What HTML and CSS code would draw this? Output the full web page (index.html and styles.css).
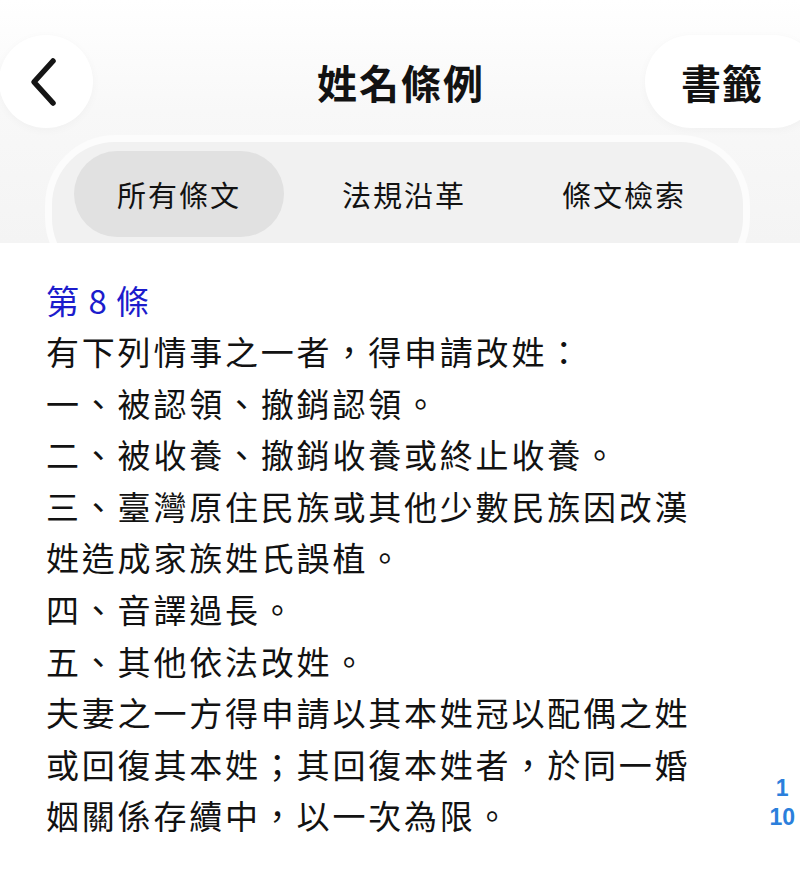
FILE: index.html
```html
<!DOCTYPE html>
<html>

<head>
    <meta name="viewport" content="width=device-width, initial-scale=1">
    <title>姓名條例</title>
    <link rel="stylesheet" href="styles.css">
</head>

<body>
    <div class="header">
        <div class="nav-row">
            <button class="back-button" aria-label="返回">
                <svg width="36" height="52" viewBox="0 0 36 52">
                    <path d="M27 5 L8 26 L27 47" fill="none" stroke="#151515" stroke-width="5.5" stroke-linecap="round" stroke-linejoin="round"/>
                </svg>
            </button>
            <h1 class="title">姓名條例</h1>
            <button class="bookmark-button">書籤</button>
        </div>
        <div class="tabs">
            <div class="tab active">所有條文</div>
            <div class="tab">法規沿革</div>
            <div class="tab">條文檢索</div>
        </div>
    </div>

    <div class="content">
        <h2 class="article-no">第 8 條</h2>
        <div class="article-text">
            <p>有下列情事之一者，得申請改姓：</p>
            <p>一、被認領、撤銷認領。</p>
            <p>二、被收養、撤銷收養或終止收養。</p>
            <p>三、臺灣原住民族或其他少數民族因改漢姓造成家族姓氏誤植。</p>
            <p>四、音譯過長。</p>
            <p>五、其他依法改姓。</p>
            <p>夫妻之一方得申請以其本姓冠以配偶之姓或回復其本姓；其回復本姓者，於同一婚姻關係存續中，以一次為限。</p>
        </div>
    </div>

    <div class="page-indicator">
        <span>1</span>
        <span>10</span>
    </div>
</body>

</html>
```

FILE: styles.css
```css
:root {
    --text-color: #121212;
    --article-blue: #1c1ccc;
    --page-blue: #2b7fdc;
    --tab-bg: #f1f1f1;
    --tab-active: #e1e1e1;
}

body {
    margin: 0;
    padding: 0;
    background-color: #ffffff;
    color: var(--text-color);
    font-family: "Noto Sans CJK TC", "Liberation Sans", sans-serif;
}

.header {
    height: 243px;
    overflow: hidden;
    background: linear-gradient(#ffffff 0%, #f8f8f8 45%, #f4f4f4 100%);
}

.nav-row {
    display: grid;
    grid-template-columns: 1fr auto 1fr;
    align-items: center;
    padding-top: 35px;
    height: 93px;
}

button {
    border: none;
    font-family: inherit;
    color: var(--text-color);
    cursor: pointer;
}

.back-button {
    justify-self: start;
    width: 94px;
    height: 93px;
    margin-left: -1px;
    border-radius: 50%;
    background-color: #ffffff;
    display: flex;
    align-items: center;
    justify-content: center;
    padding: 0 4px 0 0;
    box-shadow: 0 2px 10px rgba(0, 0, 0, 0.03);
}

.title {
    margin: 0;
    font-size: 40px;
    font-weight: bold;
    letter-spacing: 2px;
    line-height: 1;
    padding-left: 2px;
}

.bookmark-button {
    justify-self: end;
    height: 93px;
    width: 175px;
    margin-right: -20px;
    padding: 0 54px 0 36px;
    border-radius: 47px;
    background-color: #ffffff;
    font-size: 40px;
    font-weight: bold;
    letter-spacing: 1px;
    text-align: left;
    box-shadow: 0 2px 10px rgba(0, 0, 0, 0.03);
}

.tabs {
    display: grid;
    grid-template-columns: repeat(3, 1fr);
    margin: 7px 50px 0 45px;
    padding: 9px 9px 0 22px;
    height: 130px;
    border: 7px solid rgba(255, 255, 255, 0.75);
    border-radius: 70px;
    background-color: var(--tab-bg);
}

.tab {
    height: 86px;
    display: flex;
    align-items: center;
    justify-content: center;
    font-size: 29px;
    letter-spacing: 2px;
    border-radius: 43px;
}

.tab.active {
    background-color: var(--tab-active);
    margin-right: 10px;
}

.content {
    padding: 31px 30px 20px 46px;
}

.article-no {
    margin: 0;
    color: var(--article-blue);
    font-size: 33px;
    font-weight: normal;
    line-height: 52px;
    letter-spacing: 1px;
}

.article-text {
    font-size: 33px;
    line-height: 51.6px;
    letter-spacing: 2.8px;
    width: 660px;
}

.article-text p {
    margin: 0;
}

.page-indicator {
    position: absolute;
    right: 5px;
    top: 774px;
    display: flex;
    flex-direction: column;
    align-items: center;
    color: var(--page-blue);
    font-family: "Liberation Sans", sans-serif;
    font-size: 23px;
    font-weight: bold;
    line-height: 29px;
}
```
